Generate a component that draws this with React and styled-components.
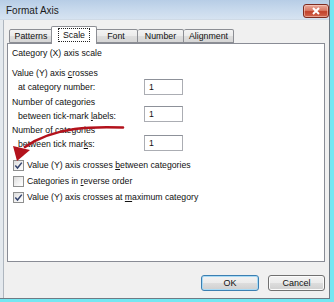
import React from "react";
import styled, { createGlobalStyle } from "styled-components";

const Global = createGlobalStyle`
  html, body { margin: 0; padding: 0; }
  body { background: #74e7f2; font-family: "Liberation Sans", Tahoma, Arial, sans-serif; }
`;

const Screen = styled.div`
  position: relative;
  width: 334px;
  height: 302px;
  background: #74e7f2;
  overflow: hidden;
`;

const Dialog = styled.div`
  width: 329px;
  height: 298px;
  border-right: 1px solid #6f7a84;
  border-bottom: 1px solid #6f7a84;
  background: #f0f0f0;
  display: flex;
  flex-direction: column;
`;

const TitleBar = styled.div`
  height: 20px;
  flex: none;
  display: flex;
  align-items: center;
  justify-content: space-between;
  padding: 0 0 0 6px;
  background: linear-gradient(#b7cde6 0%, #c6d8ec 45%, #d6e3f1 100%);
  border-bottom: 1px solid #cfdae6;
  box-sizing: border-box;
`;

const Title = styled.span`
  font-size: 10px;
  color: #1b1b1b;
  margin-top: 1px;
`;

const CloseBtn = styled.div`
  width: 24px;
  height: 12px;
  margin-right: 0;
  margin-top: 2px;
  border: 1px solid #7d2b20;
  border-radius: 3px;
  background: linear-gradient(#e9a99a 0%, #d97a66 45%, #c2412a 55%, #d2664e 100%);
  display: flex;
  align-items: center;
  justify-content: center;
  box-shadow: inset 0 0 0 1px rgba(255, 220, 210, 0.5);
`;

const Body = styled.div`
  flex: 1;
  display: flex;
  flex-direction: column;
  padding: 6px 4px 0 7px;
  box-shadow: inset 3px 0 0 #e4e9ee, inset 4px 0 0 #aeb6bf;
`;

const TabRow = styled.div`
  display: flex;
  align-items: flex-end;
  height: 17px;
  padding-left: 2px;
  position: relative;
  z-index: 2;
`;

const Tab = styled.div`
  box-sizing: border-box;
  width: ${(p) => p.$w}px;
  height: ${(p) => (p.$active ? 18 : 14)}px;
  margin: ${(p) => (p.$active ? "0 -2px -1px -2px" : "0")};
  border: 1px solid #8c8e94;
  border-bottom: ${(p) => (p.$active ? "none" : "1px solid #8c8e94")};
  border-left: ${(p) => (p.$first || p.$active ? "1px solid #8c8e94" : "none")};
  border-radius: 2px 2px 0 0;
  background: ${(p) =>
    p.$active ? "#ffffff" : "linear-gradient(#f3f3f3 0%, #ebebeb 50%, #dedede 51%, #d6d6d6 100%)"};
  font-size: 8.8px;
  color: #111;
  display: flex;
  align-items: center;
  justify-content: center;
  padding-bottom: ${(p) => (p.$active ? "2px" : "0")};
  position: relative;
  z-index: ${(p) => (p.$active ? 3 : 1)};
`;

const Focus = styled.span`
  border: 1px dotted #222;
  padding: 1px 4px 1px 4px;
  line-height: 10px;
`;

const Panel = styled.div`
  position: relative;
  height: 214px;
  background: #ffffff;
  border: 1px solid #898c95;
  padding: 3px 0 0 4px;
  box-sizing: content-box;
  display: flex;
  flex-direction: column;
`;

const Heading = styled.div`
  font-size: 8.7px;
  line-height: 13px;
  color: #111;
`;

const Fields = styled.div`
  display: flex;
  flex-direction: column;
  gap: 1px;
  margin-top: 7px;
`;

const FieldRow = styled.div`
  display: grid;
  grid-template-columns: 132px 39px;
  align-items: start;
`;

const Label = styled.div`
  font-size: 8.7px;
  line-height: 13.5px;
  color: #111;
`;

const Indent = styled.div`
  padding-left: ${(p) => p.$pad || 6}px;
`;

const Input = styled.div`
  box-sizing: border-box;
  height: 16px;
  margin-top: ${(p) => p.$top}px;
  border: 1px solid #abadb3;
  border-top-color: #8d9199;
  background: #fff;
  font-size: 8.7px;
  padding-left: 4px;
  display: flex;
  align-items: center;
  color: #111;
`;

const Checks = styled.div`
  display: flex;
  flex-direction: column;
  margin-top: 6px;
`;

const CheckRow = styled.div`
  display: flex;
  align-items: center;
  height: 16px;
  gap: 3px;
  font-size: 8.7px;
  color: #111;
`;

const Box = styled.div`
  box-sizing: border-box;
  width: 11px;
  height: 11px;
  border: 1px solid #8e8f8f;
  background: linear-gradient(135deg, #dcdcdc 0%, #f4f4f4 60%, #ffffff 100%);
  display: flex;
  align-items: center;
  justify-content: center;
  margin-left: 1px;
`;

const U = styled.span`
  text-decoration: underline;
  text-underline-offset: 1px;
`;

const Arrow = styled.svg`
  position: absolute;
  left: 0;
  top: 0;
  pointer-events: none;
  z-index: 5;
`;

const ButtonRow = styled.div`
  display: flex;
  justify-content: flex-end;
  gap: 9px;
  margin-top: 13px;
`;

const Button = styled.div`
  box-sizing: border-box;
  width: ${(p) => (p.$default ? 58 : 57)}px;
  height: 16px;
  border: 1px solid ${(p) => (p.$default ? "#3c7fb1" : "#707070")};
  border-radius: 3px;
  background: linear-gradient(#f3f3f3 0%, #ebebeb 48%, #dddddd 52%, #cfcfcf 100%);
  box-shadow: inset 0 0 0 1px ${(p) => (p.$default ? "#a9dbf6" : "#fbfbfb")};
  font-size: 9px;
  color: #111;
  display: flex;
  align-items: center;
  justify-content: center;
`;

function Check() {
  return (
    <svg width="9" height="9" viewBox="0 0 9 9">
      <path d="M1.3 4.6 L3.5 7 L7.8 1.6" fill="none" stroke="#34446e" strokeWidth="1.5" />
    </svg>
  );
}

export default function App() {
  return (
    <Screen>
      <Global />
      <Dialog>
        <TitleBar>
          <Title>Format Axis</Title>
          <CloseBtn>
            <svg width="10" height="8" viewBox="0 0 10 8">
              <path d="M2 1 L8 7 M8 1 L2 7" stroke="#ffffff" strokeWidth="2" />
            </svg>
          </CloseBtn>
        </TitleBar>
        <Body>
          <TabRow>
            <Tab $w={44} $first>Patterns</Tab>
            <Tab $w={46} $active>
              <Focus>Scale</Focus>
            </Tab>
            <Tab $w={43}>Font</Tab>
            <Tab $w={46}>Number</Tab>
            <Tab $w={50}>Alignment</Tab>
          </TabRow>
          <Panel>
            <Heading>Category (X) axis scale</Heading>
            <Fields>
              <FieldRow>
                <Label>
                  Value (Y) axis <U>c</U>rosses
                  <Indent>at category number:</Indent>
                </Label>
                <Input $top={12}>1</Input>
              </FieldRow>
              <FieldRow>
                <Label>
                  Number of categories
                  <Indent>between tick-mark <U>l</U>abels:</Indent>
                </Label>
                <Input $top={10}>1</Input>
              </FieldRow>
              <FieldRow>
                <Label>
                  Number of categories
                  <Indent>between tick mar<U>k</U>s:</Indent>
                </Label>
                <Input $top={11}>1</Input>
              </FieldRow>
            </Fields>
            <Checks>
              <CheckRow>
                <Box>
                  <Check />
                </Box>
                <span>
                  Value (Y) axis crosses <U>b</U>etween categories
                </span>
              </CheckRow>
              <CheckRow>
                <Box />
                <span>
                  Categories in <U>r</U>everse order
                </span>
              </CheckRow>
              <CheckRow>
                <Box>
                  <Check />
                </Box>
                <span>
                  Value (Y) axis crosses at <U>m</U>aximum category
                </span>
              </CheckRow>
            </Checks>
          </Panel>
          <ButtonRow>
            <Button $default>OK</Button>
            <Button>Cancel</Button>
          </ButtonRow>
        </Body>
      </Dialog>
      <Arrow width="334" height="302" viewBox="0 0 334 302">
        <path
          d="M123 127.5 C 95 126.5, 55 126, 25 147"
          fill="none"
          stroke="#b3121c"
          strokeWidth="2.6"
          strokeLinecap="round"
        />
        <polygon points="13,146 30,150 17,161" fill="#b3121c" />
      </Arrow>
    </Screen>
  );
}
